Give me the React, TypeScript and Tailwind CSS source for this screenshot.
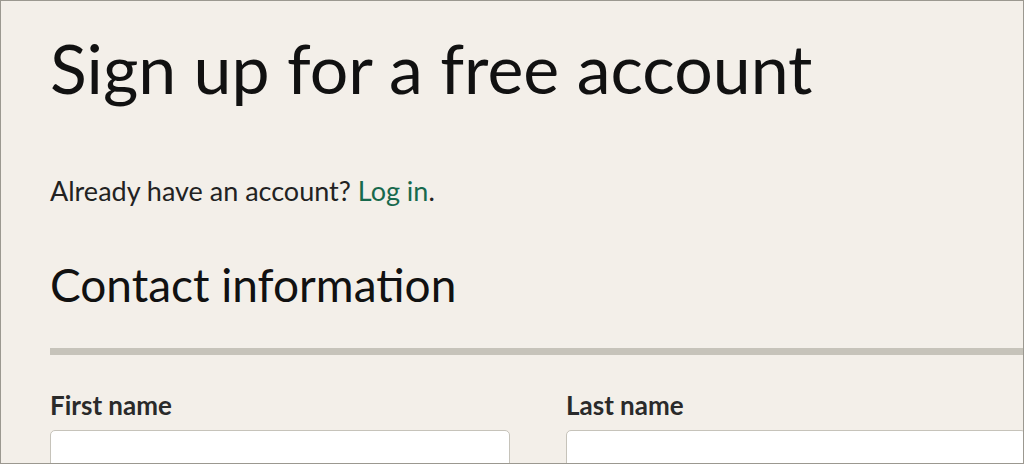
export default function App() {
  return (
    <div className="w-[1024px] h-[464px] overflow-hidden border border-[#9b9890] bg-[#f3efe9] font-['Lato',sans-serif]">
      <div className="w-[976px] ml-[49px]">
        <h1 className="mt-[27px] text-[68px] leading-[80px] text-[#111111]">Sign up for a free account</h1>
        <p className="mt-[67px] text-[27px] leading-[32px] text-[#222222]">
          Already have an account? <a href="#" className="text-[#17694d]">Log in</a>.
        </p>
        <h2 className="mt-[50px] text-[46px] leading-[56px] text-[#111111]">Contact information</h2>
        <div className="mt-[35px] h-[7px] bg-[#c6c3ba]" />
        <div className="mt-[34px] grid grid-cols-2 gap-x-[56px]">
          <div>
            <label className="block text-[26px] leading-[32px] font-bold text-[#2a2a2a]">First name</label>
            <input className="mt-[9px] w-full h-[48px] rounded-[5px] border border-[#c6c3ba] bg-white" />
          </div>
          <div>
            <label className="block text-[26px] leading-[32px] font-bold text-[#2a2a2a]">Last name</label>
            <input className="mt-[9px] w-full h-[48px] rounded-[5px] border border-[#c6c3ba] bg-white" />
          </div>
        </div>
      </div>
    </div>
  );
}
